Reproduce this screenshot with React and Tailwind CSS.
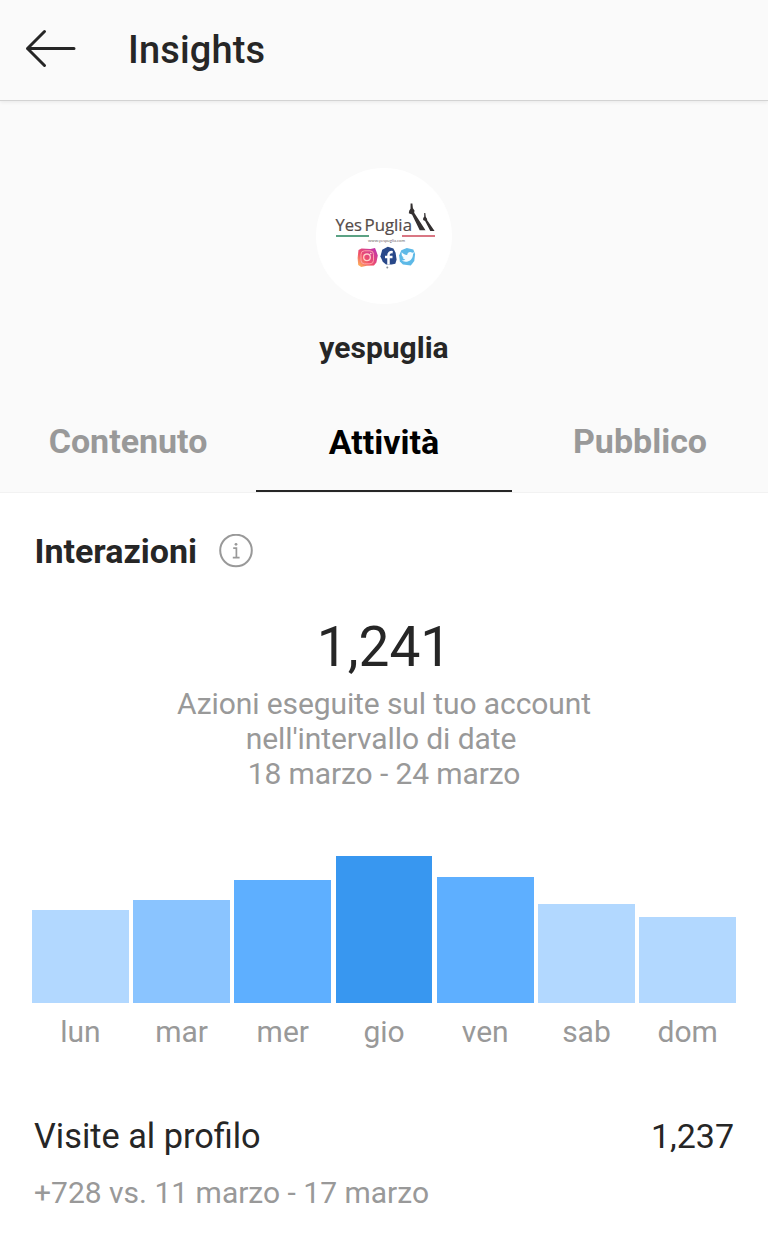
import React from 'react';

const TABS = [
  { id: 'content', label: 'Contenuto' },
  { id: 'activity', label: 'Attività' },
  { id: 'audience', label: 'Pubblico' },
];

const DAYS = [
  { label: 'lun', height: 93.5, color: 'bg-[#b2d8ff]' },
  { label: 'mar', height: 103, color: 'bg-[#8ac4ff]' },
  { label: 'mer', height: 123, color: 'bg-[#5eafff]' },
  { label: 'gio', height: 147, color: 'bg-[#3897f0]' },
  { label: 'ven', height: 126.5, color: 'bg-[#5eafff]' },
  { label: 'sab', height: 99, color: 'bg-[#b2d8ff]' },
  { label: 'dom', height: 86.5, color: 'bg-[#b2d8ff]' },
];

function BackIcon() {
  return (
    <svg
      className="w-[52px] h-[40px]"
      viewBox="0 0 52 40"
      fill="none"
      stroke="#262626"
      strokeWidth="3"
      strokeLinecap="round"
      strokeLinejoin="round"
      aria-hidden="true"
    >
      <path d="M20.5 2.5 3.5 19.5 20.5 36.5M3.5 19.5h46.5" />
    </svg>
  );
}

function InfoIcon() {
  return (
    <svg className="w-[34px] h-[34px]" viewBox="0 0 34 34" fill="none" stroke="#999" aria-hidden="true">
      <circle cx="17" cy="16.5" r="15.8" strokeWidth="2" />
      <path d="M14.2 14.2h3.2v9M13.8 23.6h6.8" strokeWidth="1.7" />
      <circle cx="17" cy="10.3" r="1.4" fill="#999" stroke="none" />
    </svg>
  );
}

function Logo() {
  return (
    <svg className="w-[136px] h-[136px]" viewBox="1 1 136 136" role="img" aria-label="YesPuglia">
      <defs>
        <linearGradient id="insta" x1="0" y1="1" x2="1" y2="0">
          <stop offset="0" stopColor="#ffc65c" />
          <stop offset="0.4" stopColor="#f0506a" />
          <stop offset="1" stopColor="#b92fb4" />
        </linearGradient>
      </defs>
      <g fill="#544b49" stroke="#544b49" strokeWidth="0.2" fontFamily="'Open Sans', sans-serif" fontSize="17">
        <text x="20.5" y="64.3" textLength="26.5" lengthAdjust="spacingAndGlyphs">Yes</text>
        <text x="49.5" y="64.3" textLength="47.5" lengthAdjust="spacingAndGlyphs">Puglia</text>
      </g>
      <g fill="#343031">
        <path d="M95.6 36.5h1.8l.5 4.7 1.6 2.4-.3 2.2 11.3 17.4h-5.8L97 47.5l-3.2-1.2.4-2.6 1.3-1.9z" />
        <path d="m109.2 46 1.1-.1.5 4 1.4 2-.2 1.2 7.6 10.8h-4.3l-5.2-9.9-2-.9.1-2.1 1-1.2z" />
      </g>
      <path d="M21 69h33" stroke="#5ba284" strokeWidth="2" />
      <path d="M87 69h33" stroke="#d97683" strokeWidth="2" />
      <text
        x="53"
        y="74.5"
        fill="#766e70"
        fontFamily="Lato, sans-serif"
        fontSize="4"
        textLength="37"
        lengthAdjust="spacingAndGlyphs"
      >
        www.yespuglia.com
      </text>

      <path
        d="m43.5 83 3-1.4 9 .4 4.5-1 1.4 3.4 1.4 4-1.4 7-2.5 3-7 .4-5.7 1.2-3-2-.6-7z"
        fill="url(#insta)"
      />
      <rect x="46" y="83.8" width="12.5" height="13" rx="3.5" fill="none" stroke="#ff9fa8" strokeWidth="1" />
      <circle cx="52" cy="90.3" r="3.3" fill="none" stroke="#ffd0cb" strokeWidth="1.3" />
      <circle cx="55.8" cy="86.6" r="0.8" fill="#ffd0cb" />

      <path
        d="m67.2 82.7 5.6-2.9 5.6 1.6 2.2 4.3 1 7-1.3 4.1-3.7.8-5.6-.2-3.2-2.6-2.4-5.2z"
        fill="#294889"
      />
      <path d="M73.5 97.5v-9.3c0-2.2 1.4-3.4 4.2-3M70 90h7.5" fill="none" stroke="#fff" strokeWidth="2.5" />
      <circle cx="72.3" cy="100.4" r="1" fill="#899098" />

      <path
        d="m86.3 83.3 5.5-2.3 6.5 1.5 1.8 4.5-.8 7-3.5 4.4-7.9-.8-3-3-.8-6z"
        fill="#5db9e7"
      />
      <path
        d="M86.7 85.3c2 2.2 3.5 2.8 5.5 2.7.1-3 3.3-4 5-2.2l2-.5-1.2 2c0 5-3.8 7.5-7.2 7.5-1.9 0-3-.5-4-1.2 1.5 0 2.7-.3 3.6-1.1-1.5-.3-2.4-1.1-2.8-2.1h1.2c-1.7-.8-2.4-2-2.1-5.1z"
        fill="#f5fcff"
      />
    </svg>
  );
}

function Tab({ label, active }) {
  return (
    <button
      type="button"
      role="tab"
      aria-selected={active}
      className={`flex-1 h-[102px] text-[34px] leading-[40px] font-bold ${
        active ? 'border-b-2 border-[#262626] text-black pt-[3px]' : 'text-[#999] pb-px'
      }`}
    >
      {label}
    </button>
  );
}

function WeekChart() {
  return (
    <div className="mt-[65px] mx-8 flex items-end gap-[4.5px]">
      {DAYS.map(({ label, height, color }) => (
        <div key={label} className="flex-1 flex flex-col">
          <div className={color} style={{ height }} />
          <span className="mt-[11px] text-center text-[30px] leading-[36px] text-[#999]">{label}</span>
        </div>
      ))}
    </div>
  );
}

export default function App() {
  return (
    <main className="w-[768px] h-[1240px] overflow-hidden bg-white text-[#262626] font-[Roboto,sans-serif]">
      <header className="h-[101px] flex items-center pl-[24px] gap-[52px] bg-[#fafafa] border-b border-[#d3d3d3] shadow-[0_1px_4px_rgba(0,0,0,0.08)] relative">
        <button type="button" aria-label="Indietro" className="-mt-[3px]">
          <BackIcon />
        </button>
        <h1 className="text-[38px] leading-[44px] font-medium tracking-[0.15px]">Insights</h1>
      </header>

      <section className="h-[392px] flex flex-col bg-[#fafafa] border-b border-[#f2f2f2]">
        <div className="flex flex-col items-center pt-[67px]">
          <div className="w-[136px] h-[136px] rounded-full overflow-hidden bg-white">
            <Logo />
          </div>
          <h2 className="mt-[26px] text-[30px] leading-[36px] font-bold">yespuglia</h2>
        </div>
        <div role="tablist" className="mt-auto flex">
          {TABS.map((tab) => (
            <Tab key={tab.id} label={tab.label} active={tab.id === 'activity'} />
          ))}
        </div>
      </section>

      <section className="pt-[38px]">
        <div className="flex items-center gap-[21.5px] pl-[34.5px] h-[40px]">
          <h3 className="text-[34px] leading-[40px] font-bold">Interazioni</h3>
          <InfoIcon />
        </div>
        <div className="mt-[44px] text-center">
          <p className="text-[55px] leading-[64px]">1,241</p>
          <p className="mt-[7px] text-[30px] leading-[35px] tracking-[-0.1px] text-[#999]">
            Azioni eseguite sul tuo account
            <br />
            <span className="mr-[6px]">nell'intervallo di date</span>
            <br />
            18 marzo - 24 marzo
          </p>
        </div>
        <WeekChart />
      </section>

      <section className="mt-[66px] px-[34px]">
        <div className="flex justify-between text-[34px] leading-[40px]">
          <h3 className="text-[34.3px]">Visite al profilo</h3>
          <span>1,237</span>
        </div>
        <p className="mt-[19px] text-[30px] leading-[36px] text-[#999]">+728 vs. 11 marzo - 17 marzo</p>
      </section>
    </main>
  );
}
